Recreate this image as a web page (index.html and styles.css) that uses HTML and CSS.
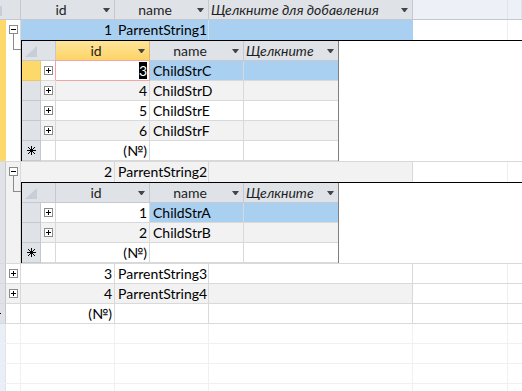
FILE: index.html
```html
<!DOCTYPE html>
<html>
<head>
<meta charset="utf-8">
<link rel="stylesheet" href="styles.css">
</head>
<body>
<div class="sheet">
 <div class="grid">
  <div class="hrow">
   <div class="hc corner"><svg width="12" height="11"><path d="M12 0V11H0z" fill="#c7ced8"/></svg></div>
   <div class="hc w-id"><span class="ht">id</span><svg class="arr" width="7" height="4"><path d="M0 0h7L4 4H3z" fill="#444"/></svg></div>
   <div class="hc w-name"><span class="ht">name</span><svg class="arr" width="7" height="4"><path d="M0 0h7L4 4H3z" fill="#444"/></svg></div>
   <div class="hc w-add"><span class="ht add">Щелкните для добавления</span><svg class="arr" width="7" height="4"><path d="M0 0h7L4 4H3z" fill="#444"/></svg></div>
   <div class="hc w-pad blank"></div>
   <div class="hc w-rest blank"></div>
  </div>

  <div class="rec exp cur">
   <div class="rsel"></div>
   <div class="rexp">
    <svg class="box" width="9" height="9"><rect x=".5" y=".5" width="8" height="8" fill="#fff" stroke="#8a8a8a"/><path d="M2 4.5h5" stroke="#000"/></svg>
    <div class="conn"></div>
   </div>
   <div class="rbody">
    <div class="row hl">
     <div class="c w-id num">1</div>
     <div class="c w-name">ParrentString1</div>
     <div class="c w-add"></div>
     <div class="c w-pad"></div>
     <div class="c w-rest"></div>
    </div>
    <div class="subwrap">
     <div class="sub">
      <div class="shrow">
       <div class="hc s-corner"><svg width="12" height="11"><path d="M12 0V11H0z" fill="#c7ced8"/></svg></div>
       <div class="hc s-col cur-col"><span class="ht">id</span><svg class="arr" width="7" height="4"><path d="M0 0h7L4 4H3z" fill="#444"/></svg></div>
       <div class="hc s-col"><span class="ht">name</span><svg class="arr" width="7" height="4"><path d="M0 0h7L4 4H3z" fill="#444"/></svg></div>
       <div class="hc s-col s-last"><span class="ht add">Щелкните</span><svg class="arr" width="7" height="4"><path d="M0 0h7L4 4H3z" fill="#444"/></svg></div>
      </div>
      <div class="srow hl">
       <div class="s-sel cur"></div>
       <div class="s-exp"><svg class="box" width="9" height="9"><rect x=".5" y=".5" width="8" height="8" fill="#fff" stroke="#8a8a8a"/><path d="M2 4.5h5M4.5 2v5" stroke="#000"/></svg></div>
       <div class="c s-col num focus"><span class="mark">3</span></div>
       <div class="c s-col blue">ChildStrC</div>
       <div class="c s-col s-last blue"></div>
      </div>
      <div class="srow alt">
       <div class="s-sel"></div>
       <div class="s-exp"><svg class="box" width="9" height="9"><rect x=".5" y=".5" width="8" height="8" fill="#fff" stroke="#8a8a8a"/><path d="M2 4.5h5M4.5 2v5" stroke="#000"/></svg></div>
       <div class="c s-col num">4</div>
       <div class="c s-col">ChildStrD</div>
       <div class="c s-col s-last"></div>
      </div>
      <div class="srow">
       <div class="s-sel"></div>
       <div class="s-exp"><svg class="box" width="9" height="9"><rect x=".5" y=".5" width="8" height="8" fill="#fff" stroke="#8a8a8a"/><path d="M2 4.5h5M4.5 2v5" stroke="#000"/></svg></div>
       <div class="c s-col num">5</div>
       <div class="c s-col">ChildStrE</div>
       <div class="c s-col s-last"></div>
      </div>
      <div class="srow alt">
       <div class="s-sel"></div>
       <div class="s-exp"><svg class="box" width="9" height="9"><rect x=".5" y=".5" width="8" height="8" fill="#fff" stroke="#8a8a8a"/><path d="M2 4.5h5M4.5 2v5" stroke="#000"/></svg></div>
       <div class="c s-col num">6</div>
       <div class="c s-col">ChildStrF</div>
       <div class="c s-col s-last"></div>
      </div>
      <div class="srow">
       <div class="s-sel"><svg width="9" height="9"><path d="M4.5 0v9M0 4.5h9M1 1l7 7M8 1l-7 7" stroke="#000"/></svg></div>
       <div class="s-exp"></div>
       <div class="c s-col num">(№)</div>
       <div class="c s-col"></div>
       <div class="c s-col s-last"></div>
      </div>
     </div>
    </div>
   </div>
  </div>

  <div class="rec exp alt">
   <div class="rsel"></div>
   <div class="rexp">
    <svg class="box" width="9" height="9"><rect x=".5" y=".5" width="8" height="8" fill="#fff" stroke="#8a8a8a"/><path d="M2 4.5h5" stroke="#000"/></svg>
    <div class="conn"></div>
   </div>
   <div class="rbody">
    <div class="row">
     <div class="c w-id num">2</div>
     <div class="c w-name">ParrentString2</div>
     <div class="c w-add"></div>
     <div class="c w-pad"></div>
     <div class="c w-rest"></div>
    </div>
    <div class="subwrap">
     <div class="sub">
      <div class="shrow">
       <div class="hc s-corner"><svg width="12" height="11"><path d="M12 0V11H0z" fill="#c7ced8"/></svg></div>
       <div class="hc s-col"><span class="ht">id</span><svg class="arr" width="7" height="4"><path d="M0 0h7L4 4H3z" fill="#444"/></svg></div>
       <div class="hc s-col"><span class="ht">name</span><svg class="arr" width="7" height="4"><path d="M0 0h7L4 4H3z" fill="#444"/></svg></div>
       <div class="hc s-col s-last"><span class="ht add">Щелкните</span><svg class="arr" width="7" height="4"><path d="M0 0h7L4 4H3z" fill="#444"/></svg></div>
      </div>
      <div class="srow">
       <div class="s-sel"></div>
       <div class="s-exp"><svg class="box" width="9" height="9"><rect x=".5" y=".5" width="8" height="8" fill="#fff" stroke="#8a8a8a"/><path d="M2 4.5h5M4.5 2v5" stroke="#000"/></svg></div>
       <div class="c s-col num">1</div>
       <div class="c s-col blue">ChildStrA</div>
       <div class="c s-col s-last blue"></div>
      </div>
      <div class="srow alt">
       <div class="s-sel"></div>
       <div class="s-exp"><svg class="box" width="9" height="9"><rect x=".5" y=".5" width="8" height="8" fill="#fff" stroke="#8a8a8a"/><path d="M2 4.5h5M4.5 2v5" stroke="#000"/></svg></div>
       <div class="c s-col num">2</div>
       <div class="c s-col">ChildStrB</div>
       <div class="c s-col s-last"></div>
      </div>
      <div class="srow">
       <div class="s-sel"><svg width="9" height="9"><path d="M4.5 0v9M0 4.5h9M1 1l7 7M8 1l-7 7" stroke="#000"/></svg></div>
       <div class="s-exp"></div>
       <div class="c s-col num">(№)</div>
       <div class="c s-col"></div>
       <div class="c s-col s-last"></div>
      </div>
     </div>
    </div>
   </div>
  </div>

  <div class="rec">
   <div class="rsel"></div>
   <div class="rexp"><svg class="box" width="9" height="9"><rect x=".5" y=".5" width="8" height="8" fill="#fff" stroke="#8a8a8a"/><path d="M2 4.5h5M4.5 2v5" stroke="#000"/></svg></div>
   <div class="rbody">
    <div class="row">
     <div class="c w-id num">3</div>
     <div class="c w-name">ParrentString3</div>
     <div class="c w-add"></div>
     <div class="c w-pad"></div>
     <div class="c w-rest"></div>
    </div>
   </div>
  </div>

  <div class="rec alt">
   <div class="rsel"></div>
   <div class="rexp"><svg class="box" width="9" height="9"><rect x=".5" y=".5" width="8" height="8" fill="#fff" stroke="#8a8a8a"/><path d="M2 4.5h5M4.5 2v5" stroke="#000"/></svg></div>
   <div class="rbody">
    <div class="row">
     <div class="c w-id num">4</div>
     <div class="c w-name">ParrentString4</div>
     <div class="c w-add"></div>
     <div class="c w-pad"></div>
     <div class="c w-rest"></div>
    </div>
   </div>
  </div>

  <div class="rec">
   <div class="rsel star"><svg width="9" height="9"><path d="M4.5 0v9M0 4.5h9M1 1l7 7M8 1l-7 7" stroke="#000"/></svg></div>
   <div class="rexp"></div>
   <div class="rbody">
    <div class="row">
     <div class="c w-id num">(№)</div>
     <div class="c w-name"></div>
     <div class="c w-add"></div>
     <div class="c w-pad"></div>
     <div class="c w-rest"></div>
    </div>
   </div>
  </div>

  <div class="rec empty"><div class="rsel"></div><div class="rexp"></div><div class="rbody"><div class="row"><div class="c w-id"></div><div class="c w-name"></div><div class="c w-add"></div><div class="c w-pad"></div><div class="c w-rest"></div></div></div></div>
  <div class="rec empty"><div class="rsel"></div><div class="rexp"></div><div class="rbody"><div class="row"><div class="c w-id"></div><div class="c w-name"></div><div class="c w-add"></div><div class="c w-pad"></div><div class="c w-rest"></div></div></div></div>
  <div class="rec empty"><div class="rsel"></div><div class="rexp"></div><div class="rbody"><div class="row"><div class="c w-id"></div><div class="c w-name"></div><div class="c w-add"></div><div class="c w-pad"></div><div class="c w-rest"></div></div></div></div>
  <div class="rec empty"><div class="rsel"></div><div class="rexp"></div><div class="rbody"><div class="row"><div class="c w-id"></div><div class="c w-name"></div><div class="c w-add"></div><div class="c w-pad"></div><div class="c w-rest"></div></div></div></div>
 </div>
</div>
</body>
</html>
```

FILE: styles.css
```css
* { box-sizing: border-box; }
html, body { margin: 0; padding: 0; background: #fff; }
body {
  font-family: Lato, "Noto Sans", sans-serif;
  font-size: 14px;
  color: #000;
}
svg { display: block; flex: none; }

.sheet { width: 522px; height: 391px; overflow: hidden; }
.grid { margin-left: -13px; width: 535px; }

/* header */
.hrow { display: flex; height: 20px; border-bottom: 1px solid #c5c9cf; }
.hc {
  display: flex;
  align-items: center;
  height: 100%;
  border-right: 1px solid #c5c9cf;
  background: #dfe3e8;
  color: #1e1e1e;
  line-height: 19px;
  white-space: nowrap;
  overflow: hidden;
}
.corner { width: 34px; flex: none; align-items: flex-end; padding: 0 0 3px 3px; }
.ht { flex: 1; text-align: center; }
.ht.add { text-align: left; font-style: italic; padding-left: 2px; }
.arr { margin: 0 4px 0 2px; }
.hc.blank { background: #edf0f6; border-right-color: #dfe3ea; }

.w-id { width: 94px; flex: none; }
.w-name { width: 94px; flex: none; }
.w-add { width: 204px; flex: none; }
.w-pad { width: 95px; flex: none; }
.w-rest { flex: 1; }

/* records */
.rec { display: flex; border-bottom: 1px solid #d9d9d9; }
.rsel { width: 19px; flex: none; background: #dfe3e8; border-right: 1px solid #c5c9cf; }
.rec.cur .rsel { background: #fdd86b; border-right-color: #fdd86b; }
.rsel.star { display: flex; align-items: center; justify-content: center; }
.rexp {
  width: 15px;
  flex: none;
  display: flex;
  flex-direction: column;
  padding: 5px 0 0 3px;
  border-right: 1px solid #d9d9d9;
  background: #fff;
}
.rec.alt .rexp { background: #f2f2f2; }
.conn {
  width: 8px;
  height: 16px;
  margin-left: 4px;
  border-left: 1px solid #8a8a8a;
  border-bottom: 1px solid #8a8a8a;
}
.rbody { flex: 1; min-width: 0; }

.row { display: flex; height: 19px; }
.rec.exp .row { height: 20px; }
.c {
  height: 100%;
  border-right: 1px solid #d9d9d9;
  line-height: 19px;
  padding: 0 3px;
  white-space: nowrap;
  overflow: hidden;
  background: #fff;
}
.num { text-align: right; padding-right: 2px; }
.row .w-pad { border-right-color: #eeeeee; }
.row .w-rest { border-right: none; }
.rec.alt .row .w-id, .rec.alt .row .w-name, .rec.alt .row .w-add { background: #f2f2f2; }
.row.hl .w-id, .row.hl .w-name, .row.hl .w-add { background: #a9d0f1; border-right-color: #a9d0f1; }
.row.hl .w-name { border-right-color: #c9dff2; }

/* empty tail */
.rec.empty { border-bottom-color: #f0f0f0; }
.rec.empty .rsel { background: #eaeef6; border-right-color: #dfe3ea; }
.rec.empty .rexp { border-right-color: #f0f0f0; }
.rec.empty .c { border-right-color: #f0f0f0; }

/* subdatasheet */
.subwrap { display: flex; border-top: 1px solid #000; background: #fff; }
.sub { width: 318px; flex: none; border-left: 1px solid #000; border-right: 1px solid #7f7f7f; }
.shrow { display: flex; height: 20px; }
.shrow .hc { border-bottom: 1px solid #c5c9cf; }
.s-corner { width: 34px; flex: none; align-items: flex-end; padding: 0 0 3px 3px; }
.s-col { width: 94px; flex: none; }
.s-last { border-right: none !important; }
.hc.cur-col { background: linear-gradient(#fee59a, #fdd366); border-right-color: #d9bd6a; }

.srow { display: flex; height: 20px; }
.srow > div { height: 20px; border-bottom: 1px solid #d9d9d9; }
.s-sel {
  width: 19px;
  flex: none;
  background: #dfe3e8;
  border-right: 1px solid #c5c9cf;
  border-bottom-color: #c5c9cf !important;
  display: flex;
  align-items: center;
  justify-content: center;
}
.s-sel.cur { background: #fdd86b; border-right-color: #f0c85a; border-bottom-color: #f0c85a !important; }
.s-exp {
  width: 15px;
  flex: none;
  border-right: 1px solid #d9d9d9;
  display: flex;
  align-items: center;
  padding-left: 3px;
  background: #fff;
}
.srow.alt .s-exp, .srow.alt .c { background: #f2f2f2; }
.c.blue { background: #a9d0f1; }
.c.focus {
  border-right-color: #f2a5a5;
  border-bottom-color: #f2a5a5 !important;
  box-shadow: -1px -1px 0 #f2a5a5;
}
.mark { background: #000; color: #fff; }
```
